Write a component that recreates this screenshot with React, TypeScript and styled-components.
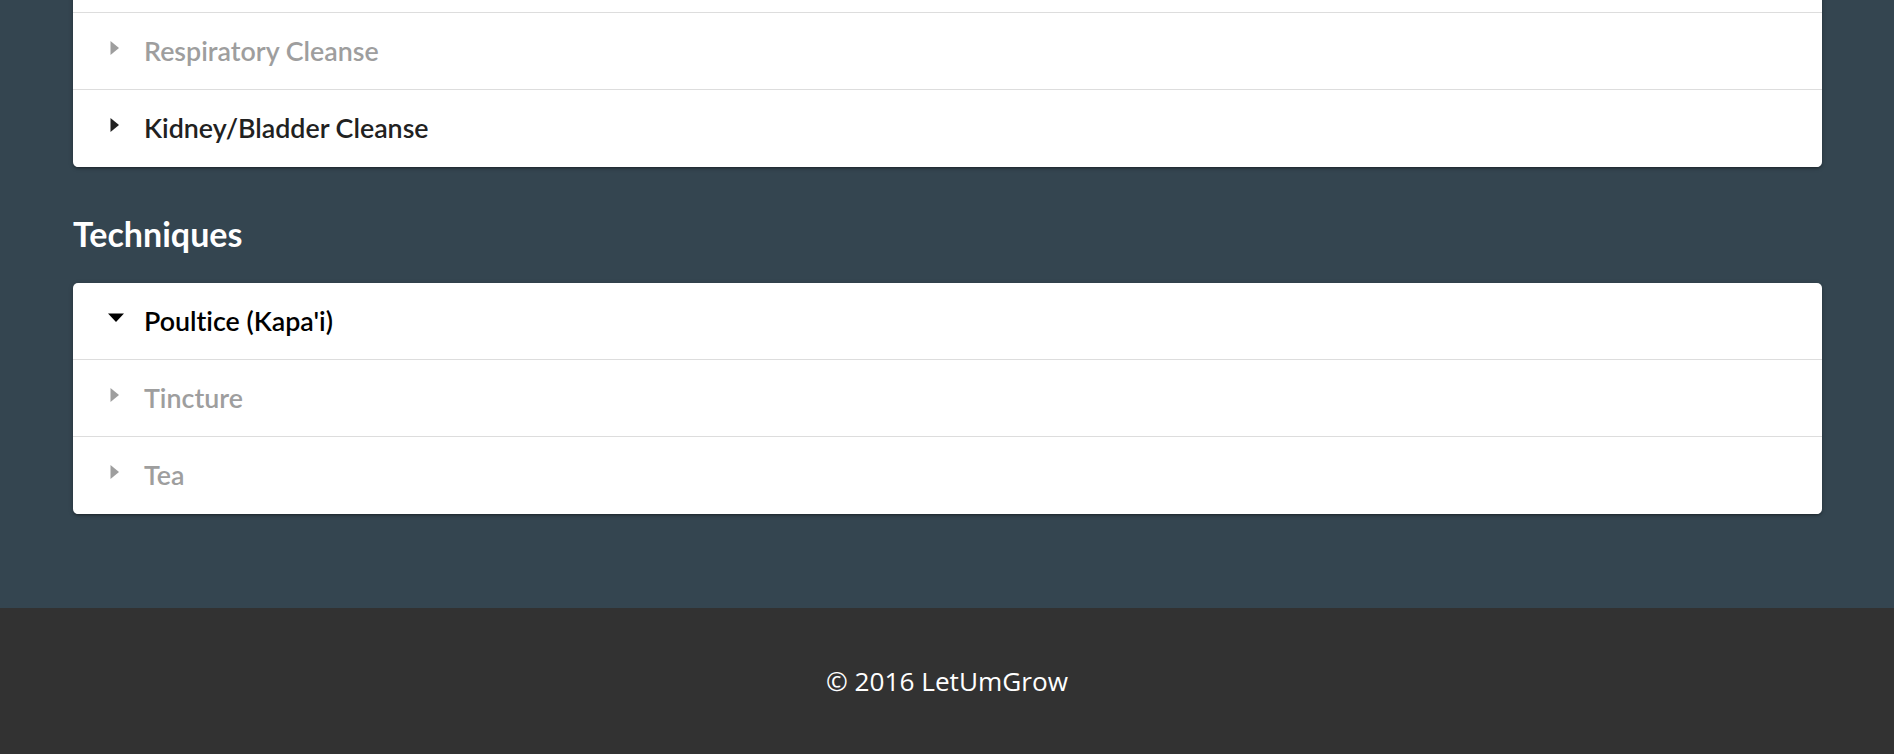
import React from "react";
import styled, { createGlobalStyle } from "styled-components";

const GlobalStyle = createGlobalStyle`
  html, body {
    margin: 0;
    padding: 0;
    background: #344550;
  }
  * {
    box-sizing: border-box;
  }
`;

const Page = styled.div`
  display: flex;
  flex-direction: column;
  min-height: 100vh;
  background: #344550;
  overflow: hidden;
`;

const Main = styled.main`
  flex: 1;
  padding: 0 72px 94px 73px;
  /* page is scrolled down: first row of the cleanse list sits above the fold */
  margin-top: -64px;
`;

const Collapsible = styled.ul`
  list-style: none;
  margin: 0;
  padding: 0;
  background: #fff;
  border-radius: 5px;
  overflow: hidden;
  box-shadow: 0 2px 2px 0 rgba(0, 0, 0, 0.14), 0 3px 1px -2px rgba(0, 0, 0, 0.12),
    0 1px 5px 0 rgba(0, 0, 0, 0.2);
`;

const Item = styled.li`
  border-bottom: 1px solid #ddd;
  &:last-child {
    border-bottom-color: #fff;
  }
`;

const Header = styled.div<{ $tone: "muted" | "dark" | "active" }>`
  display: flex;
  align-items: center;
  height: 76px;
  padding-left: 35px;
  font-family: "Lato Semibold", Lato, "Open Sans", sans-serif;
  font-weight: 600;
  font-size: 26.8px;
  font-variant-ligatures: none;
  cursor: pointer;
  color: ${(p) =>
    p.$tone === "muted" ? "#9e9e9e" : p.$tone === "dark" ? "#212121" : "#000"};
`;

const Caret = styled.svg`
  flex: none;
  width: 16px;
  height: 16px;
  margin-right: 20px;
  margin-top: -6px;
  fill: currentColor;
`;

const Heading = styled.h2`
  margin: 46px 0 28px;
  font-family: Lato, "Open Sans", sans-serif;
  font-weight: 700;
  font-size: 34px;
  line-height: 42px;
  font-variant-ligatures: none;
  color: #fff;
`;

const Footer = styled.footer`
  display: flex;
  align-items: center;
  justify-content: center;
  height: 146px;
  background: #323232;
  color: #fff;
  font-family: "Open Sans", "Noto Sans", sans-serif;
  font-size: 26.2px;
`;

type Entry = { title: string; open?: boolean; tone: "muted" | "dark" | "active" };

const cleanses: Entry[] = [
  { title: "Digestive Cleanse", tone: "muted" },
  { title: "Respiratory Cleanse", tone: "muted" },
  { title: "Kidney/Bladder Cleanse", tone: "dark" },
];

const techniques: Entry[] = [
  { title: "Poultice (Kapa'i)", open: true, tone: "active" },
  { title: "Tincture", tone: "muted" },
  { title: "Tea", tone: "muted" },
];

function CaretIcon({ open }: { open?: boolean }) {
  return (
    <Caret viewBox="0 0 16 16">
      {open ? (
        <polygon points="0,3.5 16,3.5 8,12" />
      ) : (
        <polygon points="2.5,1 11,8 2.5,15" />
      )}
    </Caret>
  );
}

function List({ items }: { items: Entry[] }) {
  return (
    <Collapsible>
      {items.map((it) => (
        <Item key={it.title}>
          <Header $tone={it.tone}>
            <CaretIcon open={it.open} />
            {it.title}
          </Header>
        </Item>
      ))}
    </Collapsible>
  );
}

function App() {
  return (
    <Page>
      <GlobalStyle />
      <Main>
        <List items={cleanses} />
        <Heading>Techniques</Heading>
        <List items={techniques} />
      </Main>
      <Footer>© 2016 LetUmGrow</Footer>
    </Page>
  );
}

export default App;
